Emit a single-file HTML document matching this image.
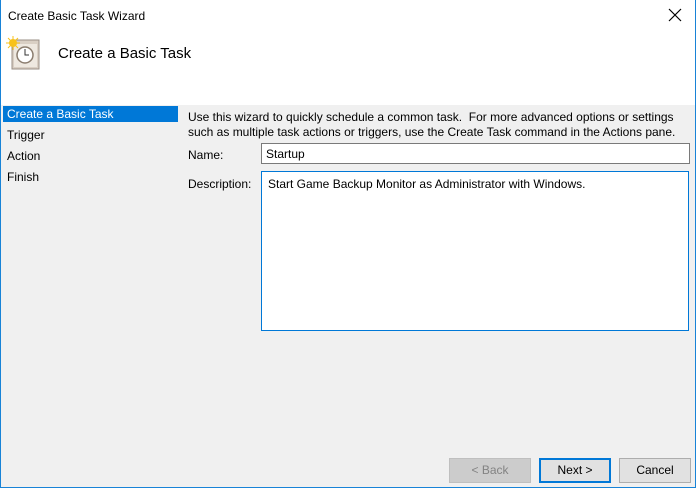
<!DOCTYPE html>
<html><head><style>
*{margin:0;padding:0;box-sizing:border-box}
body{width:696px;height:488px;background:#f0f0f0;font-family:"Liberation Sans",sans-serif;font-size:12px;color:#000;position:relative;overflow:hidden}
.a{position:absolute;white-space:nowrap}
</style></head><body>
<div class="a" style="left:0;top:0;width:696px;height:105px;background:#fff"></div>
<div class="a" style="left:8px;top:9px;font-size:12px">Create Basic Task Wizard</div>
<svg class="a" style="left:668px;top:8px" width="14" height="14"><path d="M1 1L13 13M13 1L1 13" stroke="#000" stroke-width="1.2"/></svg>
<svg class="a" style="left:6px;top:36px" width="34" height="34">
<rect x="6" y="4" width="27" height="29" fill="#d9cfc4" stroke="#9a8f86"/>
<rect x="8" y="8" width="23" height="23" fill="#eee8e0"/>
<circle cx="19" cy="19" r="8" fill="#fff" stroke="#8a7c6e" stroke-width="1.5"/>
<path d="M19 13V19H23" stroke="#333" fill="none"/>
<circle cx="7" cy="7" r="4" fill="#f8c21a"/>
<path d="M7 0V14M0 7H14M2 2L12 12M12 2L2 12" stroke="#f8c21a" stroke-width="1"/>
</svg>
<div class="a" style="left:58px;top:45px;font-size:15px">Create a Basic Task</div>
<div class="a" style="left:3px;top:106px;width:175px;height:16px;background:#0078d7;color:#fff;padding:1px 0 0 4px">Create a Basic Task</div>
<div class="a" style="left:7px;top:128px">Trigger</div>
<div class="a" style="left:7px;top:149px">Action</div>
<div class="a" style="left:7px;top:170px">Finish</div>
<div class="a" style="left:188px;top:110px;line-height:15px">Use this wizard to quickly schedule a common task.&nbsp; For more advanced options or settings<br>such as multiple task actions or triggers, use the Create Task command in the Actions pane.</div>
<div class="a" style="left:188px;top:148px">Name:</div>
<div class="a" style="left:261px;top:143px;width:429px;height:21px;background:#fff;border:1px solid #7a7a7a;padding:3px 0 0 4px">Startup</div>
<div class="a" style="left:188px;top:177px">Description:</div>
<div class="a" style="left:261px;top:171px;width:428px;height:160px;background:#fff;border:1px solid #0078d7;padding:5px 0 0 6px">Start Game Backup Monitor as Administrator with Windows.</div>
<div class="a" style="left:449px;top:458px;width:82px;height:25px;background:#cccccc;border:1px solid #bfbfbf;color:#838383;text-align:center;line-height:23px">&lt; Back</div>
<div class="a" style="left:539px;top:458px;width:72px;height:25px;background:#e1e1e1;border:2px solid #0078d7;text-align:center;line-height:21px">Next &gt;</div>
<div class="a" style="left:619px;top:458px;width:72px;height:25px;background:#e1e1e1;border:1px solid #adadad;text-align:center;line-height:23px">Cancel</div>
<div class="a" style="left:0;top:0;width:696px;height:488px;border:1px solid #1883d7;border-top:none"></div>
</body></html>
